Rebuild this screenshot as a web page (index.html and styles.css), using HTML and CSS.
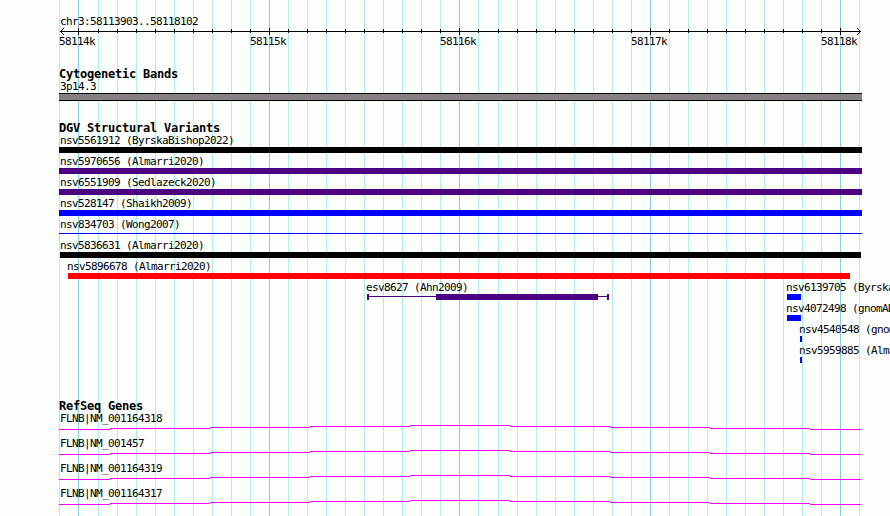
FILE: index.html
```
<!DOCTYPE html>
<html lang="en">
<head>
<meta charset="utf-8">
<title>chr3:58113903..58118102</title>
<link rel="stylesheet" href="styles.css">
</head>
<body>
<main class="browser">
  <svg class="grid" width="890" height="516" aria-hidden="true">
    <path class="minor" d="M59.5 0V516M98.5 0V516M117.5 0V516M136.5 0V516M155.5 0V516M174.5 0V516M193.5 0V516M212.5 0V516M231.5 0V516M250.5 0V516M288.5 0V516M307.5 0V516M326.5 0V516M345.5 0V516M364.5 0V516M383.5 0V516M402.5 0V516M421.5 0V516M440.5 0V516M478.5 0V516M498.5 0V516M517.5 0V516M536.5 0V516M555.5 0V516M574.5 0V516M593.5 0V516M612.5 0V516M631.5 0V516M669.5 0V516M688.5 0V516M707.5 0V516M726.5 0V516M745.5 0V516M764.5 0V516M783.5 0V516M802.5 0V516M821.5 0V516M859.5 0V516"/>
    <path class="major" d="M78.5 0V516M269.5 0V516M459.5 0V516M650.5 0V516M840.5 0V516"/>
  </svg>
  <section class="ruler">
    <div class="label">chr3:58113903..58118102</div>
    <svg class="axis" width="890" height="9">
      <path class="ink" d="M60 4.5H861M98.5 2V6M117.5 2V6M136.5 2V6M155.5 2V6M174.5 2V6M193.5 2V6M212.5 2V6M231.5 2V6M250.5 2V6M288.5 2V6M307.5 2V6M326.5 2V6M345.5 2V6M364.5 2V6M383.5 2V6M402.5 2V6M421.5 2V6M440.5 2V6M478.5 2V6M498.5 2V6M517.5 2V6M536.5 2V6M555.5 2V6M574.5 2V6M593.5 2V6M612.5 2V6M631.5 2V6M669.5 2V6M688.5 2V6M707.5 2V6M726.5 2V6M745.5 2V6M764.5 2V6M783.5 2V6M802.5 2V6M821.5 2V6M78.5 1V8M269.5 1V8M459.5 1V8M650.5 1V8M840.5 1V8"/>
      <path class="ink" d="M64 1L60.5 4.5L64 8M857 1L860.5 4.5L857 8"/>
    </svg>
    <div class="scale"><span>58114k</span><span>58115k</span><span>58116k</span><span>58117k</span><span>58118k</span></div>
  </section>

  <section class="track bands">
    <h2>Cytogenetic Bands</h2>
    <div class="label">3p14.3</div>
    <div class="band"></div>
  </section>

  <section class="track variants">
    <h2>DGV Structural Variants</h2>
    <div class="row"><div class="label">nsv5561912 (ByrskaBishop2022)</div><div class="bar black"></div></div>
    <div class="row"><div class="label">nsv5970656 (Almarri2020)</div><div class="bar indigo"></div></div>
    <div class="row"><div class="label">nsv6551909 (Sedlazeck2020)</div><div class="bar indigo"></div></div>
    <div class="row"><div class="label">nsv528147 (Shaikh2009)</div><div class="bar blue"></div></div>
    <div class="row"><div class="label">nsv834703 (Wong2007)</div><div class="bar hairline"></div></div>
    <div class="row"><div class="label">nsv5836631 (Almarri2020)</div><div class="bar black inner"></div></div>
    <div class="row red-row"><div class="label">nsv5896678 (Almarri2020)</div><div class="bar red"></div></div>
    <div class="packed">
      <div class="row ahn">
        <div class="label">esv8627 (Ahn2009)</div>
        <svg class="model" width="242" height="6"><path d="M0 0h2v2h67V0h162v2h9V0h2v6h-2V3h-9v3H69V3H2v3H0z"/></svg>
      </div>
      <div class="stack">
        <div class="row"><div class="label">nsv6139705 (ByrskaBishop2022)</div><div class="bar blue"></div></div>
        <div class="row"><div class="label">nsv4072498 (gnomAD)</div><div class="bar blue"></div></div>
        <div class="row tiny"><div class="label">nsv4540548 (gnomAD)</div><div class="bar blue"></div></div>
        <div class="row tiny"><div class="label">nsv5959885 (Almarri2020)</div><div class="bar blue"></div></div>
      </div>
    </div>
  </section>

  <section class="track genes">
    <h2>RefSeq Genes</h2>
    <div class="gene"><div class="label">FLNB|NM_001164318</div><svg class="intron" width="802" height="5"><path d="M0 4.5H51M51 3.5H151M151 2.5H251M251 1.5H351M351 .5H451M451 1.5H551M551 2.5H651M651 3.5H751M751 4.5H802"/></svg></div>
    <div class="gene"><div class="label">FLNB|NM_001457</div><svg class="intron" width="802" height="5"><path d="M0 4.5H51M51 3.5H151M151 2.5H251M251 1.5H351M351 .5H451M451 1.5H551M551 2.5H651M651 3.5H751M751 4.5H802"/></svg></div>
    <div class="gene"><div class="label">FLNB|NM_001164319</div><svg class="intron" width="802" height="5"><path d="M0 4.5H51M51 3.5H151M151 2.5H251M251 1.5H351M351 .5H451M451 1.5H551M551 2.5H651M651 3.5H751M751 4.5H802"/></svg></div>
    <div class="gene"><div class="label">FLNB|NM_001164317</div><svg class="intron" width="802" height="5"><path d="M0 4.5H51M51 3.5H151M151 2.5H251M251 1.5H351M351 .5H451M451 1.5H551M551 2.5H651M651 3.5H751M751 4.5H802"/></svg></div>
  </section>
</main>
</body>
</html>
```
FILE: styles.css
```
* { box-sizing: border-box; }
body { margin: 0; background: #fcfefc; color: #000; }
.browser {
  position: relative;
  width: 890px;
  height: 516px;
  overflow: hidden;
  font: 11px/14px "DejaVu Sans Mono", monospace;
  letter-spacing: -0.622px;
  white-space: nowrap;
}
svg { display: block; }
.grid { position: absolute; left: 0; top: 0; z-index: -1; }
.grid path, .ink, .intron path { fill: none; stroke-width: 1; shape-rendering: crispEdges; }
.minor { stroke: #afeeee; }
.major { stroke: #87ceeb; }
.ink { stroke: #000; }

.ruler { height: 68px; padding-top: 15px; }
.ruler .label { margin-left: 60px; }
.scale { display: flex; margin-left: 59px; margin-top: -1px; }
.scale span { width: 190px; flex: none; }
.scale span:first-child, .scale span:nth-child(3) { width: 191px; }

.track { padding-left: 59px; }
h2 {
  margin: 0;
  font-size: 12px;
  line-height: 12px;
  font-weight: bold;
  letter-spacing: -0.224px;
}
.label { height: 12px; padding-left: 1px; }
.ruler .label { padding-left: 0; }
.bands { height: 54px; }
.band { width: 803px; height: 8px; margin-top: 1px; background: #848084; border: solid #000; border-width: 1px 0; }

.variants { height: 278px; }
.row { height: 21px; }
.bar { width: 803px; height: 6px; margin-top: 1px; }
.black { background: #000; }
.indigo { background: #4b0082; }
.blue { background: #00f; }
.red { background: #f00; width: 782px; margin-left: 1px; }
.hairline { height: 1px; margin-top: 3px; background: #00f; }
.inner { width: 801px; margin-left: 1px; }
.red-row { padding-left: 8px; }
.red-row .label, .packed .label { padding-left: 0; }
.packed { display: flex; }
.ahn { width: 420px; padding-left: 307px; flex: none; }
.model { margin: 1px 0 0 1px; fill: #4b0082; shape-rendering: crispEdges; }
.stack { padding-left: 307px; flex: none; }
.stack .bar { width: 14px; margin-left: 1px; }
.tiny { padding-left: 13px; }
.stack .tiny .bar { width: 2px; }

.gene { height: 25px; }
.intron { margin-top: 1px; }
.intron path { stroke: #f0f; }
```
